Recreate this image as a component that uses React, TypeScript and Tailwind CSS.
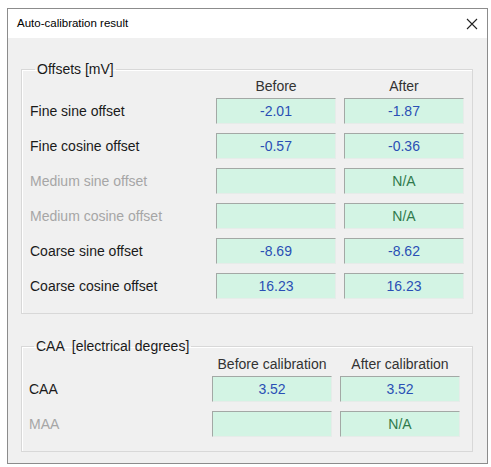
import React from 'react';

type Row = {
  label: string;
  before?: string;
  after?: string;
  disabled?: boolean;
};

const offsetRows: Row[] = [
  { label: 'Fine sine offset', before: '-2.01', after: '-1.87' },
  { label: 'Fine cosine offset', before: '-0.57', after: '-0.36' },
  { label: 'Medium sine offset', after: 'N/A', disabled: true },
  { label: 'Medium cosine offset', after: 'N/A', disabled: true },
  { label: 'Coarse sine offset', before: '-8.69', after: '-8.62' },
  { label: 'Coarse cosine offset', before: '16.23', after: '16.23' },
];

const caaRows: Row[] = [
  { label: 'CAA', before: '3.52', after: '3.52' },
  { label: 'MAA', after: 'N/A', disabled: true },
];

const ValueBox: React.FC<{ value?: string }> = ({ value }) => (
  <div className="h-[26px] flex items-center justify-center bg-[#d3f4e4] border-t border-l border-t-[#a3a8a5] border-l-[#a3a8a5] border-b border-r border-b-[#e6ece9] border-r-[#e6ece9]">
    <span className={value === 'N/A' ? 'text-[#2f7a4c]' : 'text-[#2a4fb5]'}>{value}</span>
  </div>
);

const GroupBox: React.FC<{ title: string; children: React.ReactNode; className?: string }> = ({ title, children, className }) => (
  <fieldset className={`border border-[#d8d8d8] shadow-[inset_1px_1px_0_#ffffff] ${className || ''}`}>
    <legend className="ml-[5px] px-[2px] h-[16px] leading-[16px] text-[#1a1a1a] whitespace-pre">{title}</legend>
    {children}
  </fieldset>
);

export default function App() {
  return (
    <div className="w-[491px] h-[467px] bg-white pt-[8px] pl-[7px] text-[14px] font-['Liberation_Sans',Arial,sans-serif]">
      <div className="w-[481px] h-[456px] border border-[#8c8c8c] bg-[#f0f0f0] flex flex-col">
        <div className="h-[29px] bg-white flex items-center justify-between pl-[9px] pr-[8px]">
          <span className="text-[11.5px] text-black">Auto-calibration result</span>
          <svg width="12" height="12" viewBox="0 0 12 12" className="mr-[1px]">
            <path d="M1 1 L11 11 M11 1 L1 11" stroke="#222" strokeWidth="1.1" fill="none" />
          </svg>
        </div>

        <div className="pl-[13px] pr-[14px] pt-[23px]">
          <GroupBox title="Offsets [mV]" className="pl-[8px] pr-[8px] pb-[14px]">
            <div className="grid grid-cols-[1fr_120px_120px] gap-x-[8px]">
              <div className="h-[18px]" />
              <div className="h-[18px] flex items-center justify-center text-[#333]">Before</div>
              <div className="h-[18px] flex items-center justify-center text-[#333]">After</div>
            </div>
            <div className="grid grid-cols-[1fr_120px_120px] gap-x-[8px] gap-y-[9px] mt-[3px]">
              {offsetRows.map((r) => (
                <React.Fragment key={r.label}>
                  <div className={`h-[26px] flex items-center ${r.disabled ? 'text-[#a6a6a6]' : 'text-[#1a1a1a]'}`}>{r.label}</div>
                  <ValueBox value={r.before} />
                  <ValueBox value={r.after} />
                </React.Fragment>
              ))}
            </div>
          </GroupBox>

          <GroupBox title="CAA  [electrical degrees]" className="mt-[24px] pl-[7px] pr-[12px] pb-[14px]">
            <div className="grid grid-cols-[1fr_120px_120px] gap-x-[8px] pt-[1px]">
              <div className="h-[18px]" />
              <div className="h-[18px] flex items-center justify-center text-[#333] whitespace-nowrap">Before calibration</div>
              <div className="h-[18px] flex items-center justify-center text-[#333] whitespace-nowrap">After calibration</div>
            </div>
            <div className="grid grid-cols-[1fr_120px_120px] gap-x-[8px] gap-y-[9px] mt-[3px]">
              {caaRows.map((r) => (
                <React.Fragment key={r.label}>
                  <div className={`h-[26px] flex items-center ${r.disabled ? 'text-[#a6a6a6]' : 'text-[#1a1a1a]'}`}>{r.label}</div>
                  <ValueBox value={r.before} />
                  <ValueBox value={r.after} />
                </React.Fragment>
              ))}
            </div>
          </GroupBox>
        </div>
      </div>
    </div>
  );
}
